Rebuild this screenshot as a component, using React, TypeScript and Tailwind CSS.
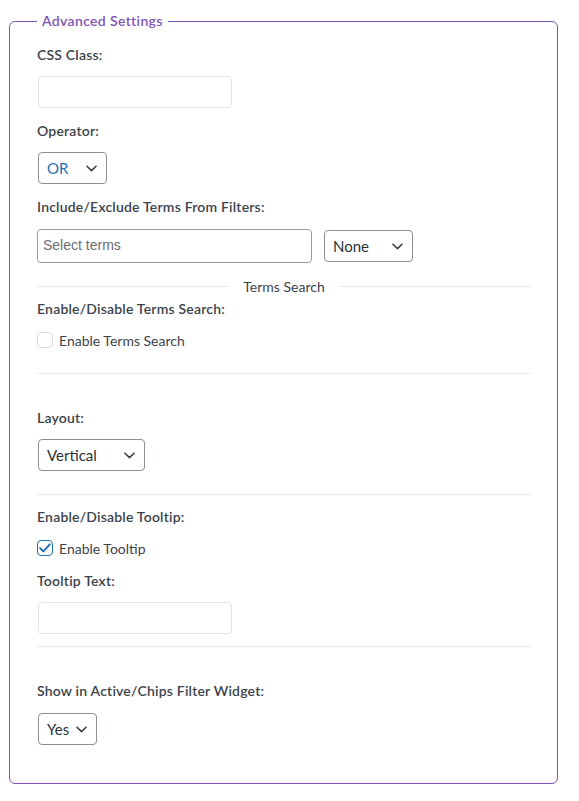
import type { ReactNode } from "react";

const font = { fontFamily: '"Segoe UI", "Lato", "Noto Sans", sans-serif' };

function Chevron() {
  return (
    <svg width="11" height="7" viewBox="0 0 11 7" fill="none" className="shrink-0">
      <path d="M1 1.2L5.5 5.6L10 1.2" stroke="#3c434a" strokeWidth="1.6" strokeLinecap="round" strokeLinejoin="round" />
    </svg>
  );
}

function Label({ children, className = "" }: { children: ReactNode; className?: string }) {
  return <p className={`text-[14px] leading-5 font-semibold tracking-[0.2px] text-[#3c434a] ${className}`}>{children}</p>;
}

function Select({ value, width, className = "", valueClass = "text-[#2c3338]" }: { value: string; width: string; className?: string; valueClass?: string }) {
  return (
    <div className={`flex h-8 items-center justify-between rounded-[4px] border border-[#8c8f94] bg-white pl-2 pr-[9px] ${width} ${className}`}>
      <span className={`text-[15px] ${valueClass}`}>{value}</span>
      <Chevron />
    </div>
  );
}

function TextBox({ className = "" }: { className?: string }) {
  return <div className={`ml-px h-8 w-[194px] rounded-[4px] border border-[#e2e4e7] bg-white ${className}`} />;
}

function Checkbox({ label, checked = false, className = "" }: { label: string; checked?: boolean; className?: string }) {
  return (
    <div className={`flex h-5 items-center gap-[6px] ${className}`}>
      {checked ? (
        <span className="flex h-4 w-4 items-center justify-center rounded-[4px] border border-[#2271b1] bg-white">
          <svg width="12" height="10" viewBox="0 0 12 10" fill="none">
            <path d="M1.2 5.2L4.4 8.4L10.8 1.4" stroke="#2271b1" strokeWidth="2" strokeLinecap="round" strokeLinejoin="round" />
          </svg>
        </span>
      ) : (
        <span className="h-4 w-4 rounded-[4px] border border-[#dcdcde] bg-white" />
      )}
      <span className="text-[14px] text-[#3c434a]">{label}</span>
    </div>
  );
}

function Rule({ className = "" }: { className?: string }) {
  return <div className={`h-px bg-[#eaeaea] ${className}`} />;
}

export default function App() {
  return (
    <div className="min-h-[801px] bg-white pl-[9px] pt-[11px]" style={font}>
      <fieldset className="w-[549px] rounded-[6px] border border-[#7f54b3] pb-[38px] pl-[27px] pr-[26px] pt-[14px]">
        <legend className="px-[5px] text-[14px] leading-5 font-semibold tracking-[0.35px] text-[#7f54b3]">Advanced Settings</legend>

        <Label>CSS Class:</Label>
        <TextBox className="mt-[11px]" />

        <Label className="mt-[13px]">Operator:</Label>
        <Select value="OR" width="w-[69px]" className="ml-px mt-[11px]" valueClass="text-[#2271b1]" />

        <Label className="mt-[13px]">Include/Exclude Terms From Filters:</Label>
        <div className="mt-3 flex items-center gap-3">
          <div className="flex h-[34px] w-[275px] items-center rounded-[4px] border border-[#9a9a9a] pl-[5px] pb-[2px]">
            <span className="text-[14px] text-[#6b6e72]" style={{ fontFamily: '"Liberation Sans", Arial, sans-serif' }}>
              Select terms
            </span>
          </div>
          <Select value="None" width="w-[89px]" />
        </div>

        <div className="mt-[13px] flex h-5 items-center gap-[14px]">
          <Rule className="flex-1" />
          <span className="text-[14px] text-[#3c434a]">Terms Search</span>
          <Rule className="flex-1" />
        </div>

        <Label className="mt-[3px]">Enable/Disable Terms Search:</Label>
        <Checkbox label="Enable Terms Search" className="mt-[11px]" />
        <Rule className="mt-[23px]" />

        <Label className="mt-[34px]">Layout:</Label>
        <Select value="Vertical" width="w-[107px]" className="ml-px mt-[11px]" />
        <Rule className="mt-[23px]" />

        <Label className="mt-3">Enable/Disable Tooltip:</Label>
        <Checkbox label="Enable Tooltip" checked className="mt-[11px]" />

        <Label className="mt-[13px]">Tooltip Text:</Label>
        <TextBox className="mt-[11px]" />
        <Rule className="mt-3" />

        <Label className="mt-[34px]">Show in Active/Chips Filter Widget:</Label>
        <Select value="Yes" width="w-[59px]" className="ml-px mt-3" />
      </fieldset>
    </div>
  );
}
